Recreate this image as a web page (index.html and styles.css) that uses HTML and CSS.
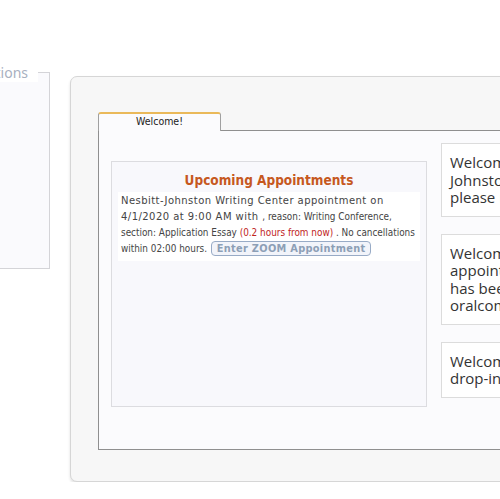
FILE: index.html
```html
<!DOCTYPE html>
<html>
    <head>
        <meta charset="utf-8">
        <title>Welcome</title>
        <link rel="stylesheet" href="styles.css">
    </head>
    <body>
        <main class="pagina">
            <fieldset class="opcoes">
                <legend>Appointment Options</legend>
            </fieldset>

            <section class="painel">
                <div class="abas">
                    <div class="aba ativa">Welcome!</div>
                </div>
                <div class="conteudo-aba">
                    <article class="proximas">
                        <h2>Upcoming Appointments</h2>
                        <div class="item">
                            <span class="grande">Nesbitt-Johnston Writing Center appointment on 4/1/2020 at 9:00 AM with </span>, reason: Writing Conference, section: Application Essay <span class="tempo">(0.2 hours from now)</span> . No cancellations within 02:00 hours.
                            <button class="botao-zoom">Enter ZOOM Appointment</button>
                        </div>
                    </article>
                    <aside class="avisos">
                        <div class="aviso">Welcome to Nesbitt-<br>Johnston Writing Center,<br>please read the policies below.</div>
                        <div class="aviso">Welcome! Your<br>appointment request<br>has been sent to<br>oralcomm@example.edu</div>
                        <div class="aviso">Welcome to the<br>drop-in schedule.</div>
                    </aside>
                </div>
            </section>
        </main>
    </body>
</html>
```

FILE: styles.css
```css
body {
    margin: 0;
    background-color: white;
    font-family: "DejaVu Sans", sans-serif;
    overflow: hidden;
}

.pagina {
    display: flex;
    align-items: flex-start;
    width: 800px;
}

/* caixa da esquerda, quase toda fora da tela */
.opcoes {
    width: 196px;
    height: 206px;
    margin: 63px 0 0 -146px;
    padding: 0;
    border: 1px solid #d4d4d8;
    background-color: #fafafd;
    box-sizing: border-box;
}

.opcoes legend {
    margin-left: auto;
    margin-right: 11px;
    padding: 0 10px 0 4px;
    font-family: "Noto Sans", sans-serif;
    font-size: 14px;
    color: #a8b0bf;
    background-color: white;
}

.painel {
    margin: 76px 0 0 20px;
    width: 600px;
    height: 406px;
    padding: 35px 0 0 27px;
    box-sizing: border-box;
    background-color: #f7f7f7;
    border: 1px solid #d6d6d6;
    border-radius: 7px;
    box-shadow: 0 2px 3px rgba(0, 0, 0, .12);
}

.abas {
    display: flex;
}

.aba {
    width: 121px;
    height: 17px;
    border: 1px solid #a0a0a0;
    border-top: 2px solid #eab95a;
    border-bottom: none;
    border-radius: 3px 3px 0 0;
    background-color: #fbfbfd;
    font-family: "DejaVu Sans Condensed", sans-serif;
    font-size: 10.5px;
    line-height: 14px;
    text-align: center;
    color: #222;
    margin-bottom: -1px;
    position: relative;
}

.conteudo-aba {
    display: flex;
    align-items: flex-start;
    gap: 14px;
    height: 320px;
    box-sizing: border-box;
    padding: 12px 0 0 12px;
    border: 1px solid #8f8f8f;
    border-right: none;
    background-color: #fbfbfd;
}

.proximas {
    flex-shrink: 0;
    width: 316px;
    height: 246px;
    margin-top: 18px;
    box-sizing: border-box;
    border: 1px solid #dcdce0;
    background-color: #f8f8fc;
    padding: 10px 6px;
}

.proximas h2 {
    margin: 0 0 4px 0;
    text-align: center;
    font-family: "DejaVu Sans Condensed", sans-serif;
    font-size: 13.5px;
    color: #c6581f;
}

.item {
    background-color: white;
    padding: 1px 4px 4px 3px;
    font-family: "DejaVu Sans Condensed", sans-serif;
    font-size: 9.9px;
    line-height: 16px;
    color: #444;
}

.grande {
    font-family: "DejaVu Sans", sans-serif;
    font-size: 10px;
    letter-spacing: .45px;
}

.tempo {
    color: #c0231c;
}

.botao-zoom {
    font-family: "DejaVu Sans", sans-serif;
    font-weight: bold;
    font-size: 9.8px;
    letter-spacing: .3px;
    color: #8d9fb6;
    background-color: #f2f4fa;
    border: 1px solid #98abc6;
    border-radius: 4px;
    padding: 1px 5px;
    margin-left: 1px;
}

.avisos {
    flex-shrink: 0;
    display: flex;
    flex-direction: column;
    gap: 17px;
    width: 220px;
}

.aviso {
    border: 1px solid #dcdcdc;
    background-color: white;
    padding: 10px 8px 9px 8px;
    font-family: "Open Sans", sans-serif;
    font-size: 15px;
    line-height: 17.5px;
    color: #333;
    white-space: nowrap;
}
```
